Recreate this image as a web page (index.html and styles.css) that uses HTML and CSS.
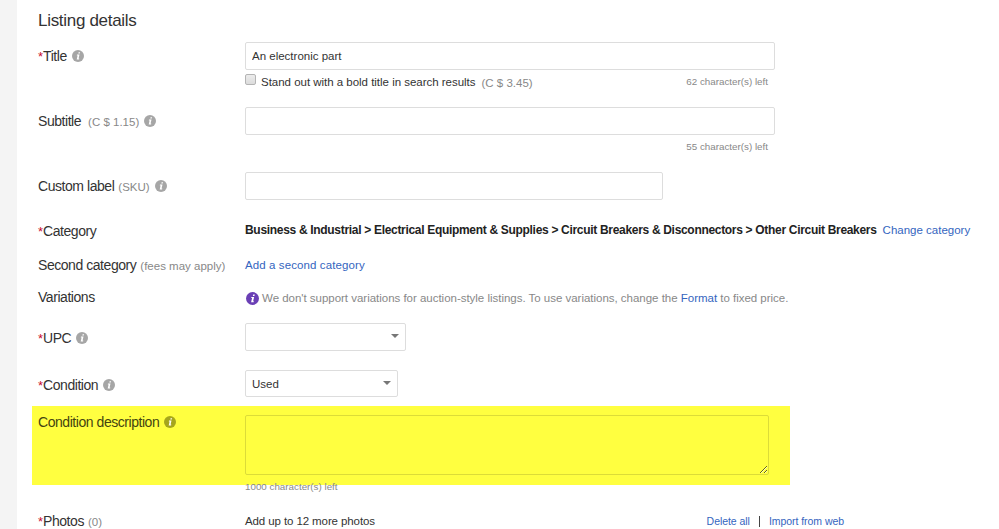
FILE: index.html
```
<!DOCTYPE html>
<html lang="en">
<head>
    <meta charset="UTF-8">
    <meta name="viewport" content="width=device-width, initial-scale=1.0">
    <title>Listing details</title>
    <link rel="stylesheet" href="styles.css">
</head>
<body>
    <svg class="icon-defs" width="0" height="0">
        <symbol id="info" viewBox="0 0 12 12">
            <circle cx="6" cy="6" r="6" fill="currentColor"/>
            <path d="M6.6 2.2h1.5l-.3 1.4H6.3zM5 4.5h2.5L6.6 8.6h.7l-.2.9H4.7l.9-4H4.8z" fill="#fff"/>
        </symbol>
    </svg>

    <main class="listing-form">
        <h1 class="form-title">Listing details</h1>

        <div class="form-row row-tall">
            <div class="label"><span class="req">*</span><label for="title" class="name">Title</label><svg class="info"><use href="#info"/></svg></div>
            <div class="field">
                <input type="text" id="title" class="text-input" value="An electronic part">
                <div class="below-input">
                    <input type="checkbox" id="bold" class="checkbox">
                    <label for="bold" class="bold-label">Stand out with a bold title in search results</label>
                    <span class="fee">(C $ 3.45)</span>
                    <span class="chars">62 character(s) left</span>
                </div>
            </div>
        </div>

        <div class="form-row row-tall">
            <div class="label"><label for="subtitle" class="name">Subtitle</label><span class="hint hint-fee">(C $ 1.15)</span><svg class="info"><use href="#info"/></svg></div>
            <div class="field">
                <input type="text" id="subtitle" class="text-input">
                <div class="below-input">
                    <span class="chars">55 character(s) left</span>
                </div>
            </div>
        </div>

        <div class="form-row row-sku">
            <div class="label"><label for="sku" class="name">Custom label</label><span class="hint">(SKU)</span><svg class="info"><use href="#info"/></svg></div>
            <div class="field">
                <input type="text" id="sku" class="text-input input-sku">
            </div>
        </div>

        <div class="form-row row-category">
            <div class="label"><span class="req">*</span><span class="name">Category</span></div>
            <div class="field field-line category-line">
                <b class="category">Business &amp; Industrial &gt; Electrical Equipment &amp; Supplies &gt; Circuit Breakers &amp; Disconnectors &gt; Other Circuit Breakers</b>
                <a href="#" class="change">Change category</a>
            </div>
        </div>

        <div class="form-row row-second">
            <div class="label"><span class="name">Second category</span><span class="hint">(fees may apply)</span></div>
            <div class="field field-line">
                <a href="#" class="add-second">Add a second category</a>
            </div>
        </div>

        <div class="form-row row-variations">
            <div class="label"><span class="name">Variations</span></div>
            <div class="field field-line variations-line">
                <svg class="info info-purple"><use href="#info"/></svg>
                <p class="notice">We don't support variations for auction-style listings. To use variations, change the <a href="#">Format</a> to fixed price.</p>
            </div>
        </div>

        <div class="form-row row-upc">
            <div class="label label-select"><span class="req">*</span><span class="name">UPC</span><svg class="info"><use href="#info"/></svg></div>
            <div class="field">
                <div class="select select-upc"><span></span><i class="arrow"></i></div>
            </div>
        </div>

        <div class="form-row row-condition">
            <div class="label label-select"><span class="req">*</span><span class="name">Condition</span><svg class="info"><use href="#info"/></svg></div>
            <div class="field">
                <div class="select select-condition"><span>Used</span><i class="arrow"></i></div>
            </div>
        </div>

        <div class="form-row row-description">
            <div class="label"><label for="description" class="name">Condition description</label><svg class="info"><use href="#info"/></svg></div>
            <div class="field">
                <textarea id="description" class="description"></textarea>
                <div class="chars-desc">1000 character(s) left</div>
            </div>
        </div>

        <div class="form-row row-photos">
            <div class="label"><span class="req">*</span><span class="name">Photos</span><span class="hint">(0)</span></div>
            <div class="field photos-line">
                <span class="photos-text">Add up to 12 more photos</span>
                <div class="photo-links">
                    <a href="#">Delete all</a>
                    <span class="divider"></span>
                    <a href="#">Import from web</a>
                </div>
            </div>
        </div>
    </main>
</body>
</html>
```

FILE: styles.css
```
* {
    margin: 0;
    padding: 0;
    box-sizing: border-box;
}

body {
    background: #f4f4f4;
    color: #333;
    font-family: "Liberation Sans", Arial, sans-serif;
    font-size: 11.5px;
    height: 529px;
    overflow: hidden;
}

a {
    color: #3465c0;
    text-decoration: none;
}

.icon-defs {
    display: block;
}

.listing-form {
    margin-left: 17px;
    height: 529px;
    background: #fff;
    overflow: hidden;
}

.form-title {
    height: 42px;
    padding-left: 21px;
    font-size: 17px;
    font-weight: normal;
    line-height: 41px;
    letter-spacing: -0.3px;
}

/* Rows */
.form-row {
    display: grid;
    grid-template-columns: 207px 1fr;
    padding-left: 21px;
    white-space: nowrap;
}

.row-tall {
    height: 65px;
}

.row-sku {
    height: 45px;
}

.row-category {
    height: 34px;
}

.row-second {
    height: 32px;
}

.row-variations {
    height: 40px;
}

.row-upc {
    height: 47px;
}

.row-condition {
    height: 36px;
}

.row-description {
    width: 758px;
    height: 79px;
    margin-left: 15px;
    padding-left: 6px;
    background: #ffff40;
}

.row-photos {
    margin-top: 22px;
    height: 28px;
}

/* Labels */
.label {
    display: flex;
    align-items: center;
    height: 28px;
}

.label-select {
    padding-top: 2px;
}

.name {
    font-size: 14px;
    letter-spacing: -0.45px;
}

.req {
    color: #c8102e;
    font-size: 13px;
}

.hint {
    margin: 2px 0 0 4px;
    color: #888;
    font-size: 11.5px;
}

.hint-fee {
    margin-left: 7px;
}

.info {
    width: 12px;
    height: 12px;
    margin-left: 5px;
    color: #a6a6a6;
    flex-shrink: 0;
}

/* Fields */
.text-input {
    display: block;
    width: 530px;
    height: 28px;
    padding: 0 6px;
    border: 1px solid #ddd;
    border-radius: 2px;
    color: #333;
    font-family: inherit;
    font-size: 11.5px;
}

.input-sku {
    width: 418px;
}

.below-input {
    display: flex;
    align-items: center;
    width: 523px;
    height: 23px;
}

.checkbox {
    appearance: none;
    width: 11px;
    height: 11px;
    margin: -4px 5px 0 0;
    border: 1px solid #b4b4b4;
    border-radius: 2px;
    background: linear-gradient(#ececec, #dcdcdc);
}

.fee {
    margin: 2px 0 0 6px;
    color: #888;
}

.bold-label {
    letter-spacing: -0.02px;
}

.chars {
    margin-left: auto;
    color: #888;
    font-size: 9.8px;
}

.field-line {
    display: flex;
    align-items: center;
    height: 28px;
}

.category-line {
    height: 26px;
}

.category {
    color: #222;
    font-size: 12px;
    letter-spacing: -0.31px;
}

.change {
    margin-left: 6px;
}

.add-second {
    letter-spacing: 0.1px;
}

.info-purple {
    width: 13px;
    height: 13px;
    margin-left: 1px;
    margin-right: 3px;
    color: #6a3fb5;
}

.variations-line {
    padding-top: 2px;
}

.notice {
    color: #888;
    letter-spacing: -0.02px;
}

.select {
    display: flex;
    align-items: center;
    justify-content: space-between;
    height: 28px;
    padding: 0 6px;
    border: 1px solid #ddd;
    border-radius: 2px;
    background: #fff;
}

.select-upc {
    width: 161px;
}

.select-condition {
    width: 153px;
    height: 27px;
}

.arrow {
    margin-top: -2px;
    border: 4px solid transparent;
    border-top: 4px solid #777;
    border-bottom: 0;
}

/* Condition description */
.row-description .label {
    padding-top: 4px;
}

.row-description .name {
    color: #444410;
}

.row-description .info {
    color: #a6a61c;
}

.description {
    display: block;
    width: 524px;
    height: 60px;
    margin-top: 9px;
    border: 1px solid #dcdc38;
    border-radius: 2px;
    background: transparent;
    resize: both;
}

.chars-desc {
    margin-top: 6px;
    color: #888;
    font-size: 9.8px;
    line-height: 12px;
}

/* Photos */
.photos-line {
    display: flex;
    align-items: center;
    justify-content: space-between;
    width: 599px;
    height: 28px;
}

.photos-text {
    letter-spacing: -0.1px;
}

.photo-links {
    display: flex;
    align-items: center;
    font-size: 10.5px;
    letter-spacing: -0.05px;
}

.divider {
    width: 1px;
    height: 11px;
    margin: 0 9px;
    background: #444;
}
```
